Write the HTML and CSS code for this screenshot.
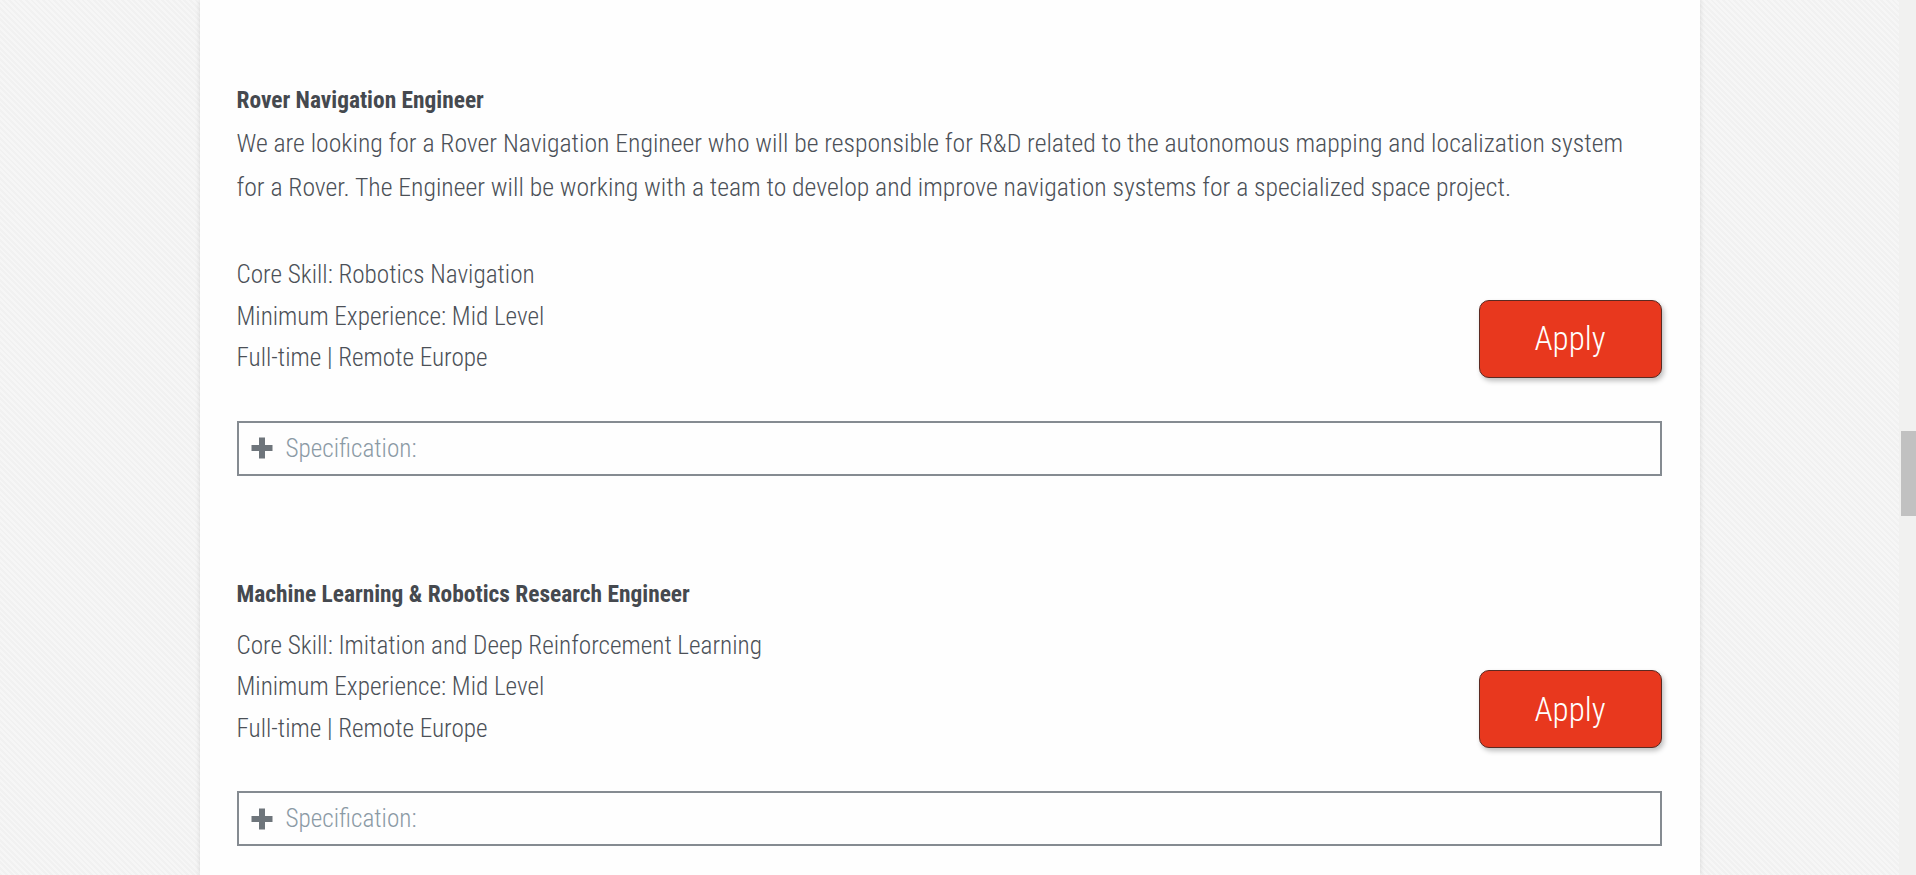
FILE: index.html
```html
<!DOCTYPE html>
<html lang="en">
<head>
<meta charset="utf-8">
<title>Careers</title>
<link rel="stylesheet" href="styles.css">
</head>
<body>
<div class="page">
  <main class="content">
    <section class="job">
      <h3 class="job-title">Rover Navigation Engineer</h3>
      <p class="job-desc">We are looking for a Rover Navigation Engineer who will be responsible for R&amp;D related to the autonomous mapping and localization system for a Rover. The Engineer will be working with a team to develop and improve navigation systems for a specialized space project.</p>
      <div class="job-meta">
        <div class="meta-lines">
          <div>Core Skill: Robotics Navigation</div>
          <div>Minimum Experience: Mid Level</div>
          <div>Full-time | Remote Europe</div>
        </div>
        <a class="apply" href="#">Apply</a>
      </div>
      <div class="spec">
        <svg class="plus" viewBox="0 0 22 22" width="22" height="22"><path d="M8 0.5h6v7.5h7.5v6h-7.5v7.5h-6v-7.5h-7.5v-6h7.5z" fill="#6e757b"/></svg>
        <span>Specification:</span>
      </div>
    </section>
    <section class="job job-short">
      <h3 class="job-title">Machine Learning &amp; Robotics Research Engineer</h3>
      <div class="job-meta">
        <div class="meta-lines">
          <div>Core Skill: Imitation and Deep Reinforcement Learning</div>
          <div>Minimum Experience: Mid Level</div>
          <div>Full-time | Remote Europe</div>
        </div>
        <a class="apply" href="#">Apply</a>
      </div>
      <div class="spec">
        <svg class="plus" viewBox="0 0 22 22" width="22" height="22"><path d="M8 0.5h6v7.5h7.5v6h-7.5v7.5h-6v-7.5h-7.5v-6h7.5z" fill="#6e757b"/></svg>
        <span>Specification:</span>
      </div>
    </section>
  </main>
</div>
<div class="scrollbar"><div class="thumb"></div></div>
</body>
</html>
```
FILE: styles.css
```css
html, body {
  margin: 0;
  padding: 0;
  height: 100%;
  overflow: hidden;
}
body {
  font-family: "Roboto Condensed", "DejaVu Sans Condensed", "Liberation Sans", sans-serif;
  font-weight: 300;
  background-color: #f3f3f3;
  background-image: repeating-linear-gradient(45deg, #f1f1f1 0, #f1f1f1 2px, #f6f6f6 2px, #f6f6f6 4px);
}
.page {
  width: calc(100% - 17px);
  height: 100%;
  display: flex;
  justify-content: center;
}
.content {
  width: 1500px;
  box-sizing: border-box;
  background: #fefefe;
  box-shadow: 0 0 5px rgba(0, 0, 0, 0.12);
  padding: 80px 38px 0 37px;
}
.job-title {
  margin: 0;
  font-size: 23.4px;
  line-height: 41px;
  font-weight: 700;
  color: #45494f;
}
.job-desc {
  margin: 0 0 45px;
  max-width: 1405px;
  font-size: 25.7px;
  line-height: 44px;
  color: #4b5057;
}
.job-meta {
  display: flex;
  justify-content: space-between;
  align-items: flex-end;
}
.meta-lines {
  font-size: 25.2px;
  line-height: 41.5px;
  color: #4b5057;
}
.apply {
  width: 183px;
  height: 78px;
  box-sizing: border-box;
  display: flex;
  align-items: center;
  justify-content: center;
  background: #e8381e;
  border: 1px solid #5b2a22;
  border-radius: 10px;
  box-shadow: 2px 3px 5px rgba(0, 0, 0, 0.25);
  color: #fff;
  font-size: 33px;
  text-decoration: none;
  margin-bottom: 1px;
}
.spec {
  margin-top: 42px;
  height: 55px;
  box-sizing: border-box;
  border: 2px solid #858b91;
  display: flex;
  align-items: center;
  padding-left: 12px;
  gap: 13px;
  font-size: 25.2px;
  color: #8b9aa5;
}
.plus {
  flex: none;
}
.job-short {
  margin-top: 98px;
}
.job-short .job-title {
  margin-bottom: 10px;
}
.scrollbar {
  position: fixed;
  top: 0;
  right: 0;
  width: 17px;
  height: 100%;
  background: #f1f1f0;
}
.thumb {
  position: absolute;
  top: 431px;
  left: 2px;
  right: 0;
  height: 85px;
  background: #c1c1c1;
}
```
